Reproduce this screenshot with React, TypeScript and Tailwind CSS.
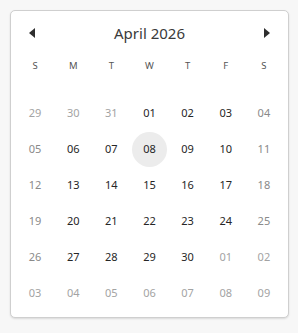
const weekdays = ["S", "M", "T", "W", "T", "F", "S"];

type Day = { n: string; out?: boolean };

const days: Day[] = [
  { n: "29", out: true }, { n: "30", out: true }, { n: "31", out: true },
  { n: "01" }, { n: "02" }, { n: "03" }, { n: "04" },
  { n: "05" }, { n: "06" }, { n: "07" }, { n: "08" }, { n: "09" }, { n: "10" }, { n: "11" },
  { n: "12" }, { n: "13" }, { n: "14" }, { n: "15" }, { n: "16" }, { n: "17" }, { n: "18" },
  { n: "19" }, { n: "20" }, { n: "21" }, { n: "22" }, { n: "23" }, { n: "24" }, { n: "25" },
  { n: "26" }, { n: "27" }, { n: "28" }, { n: "29" }, { n: "30" },
  { n: "01", out: true }, { n: "02", out: true },
  { n: "03", out: true }, { n: "04", out: true }, { n: "05", out: true }, { n: "06", out: true },
  { n: "07", out: true }, { n: "08", out: true }, { n: "09", out: true },
];

export default function App() {
  return (
    <div className="min-h-[333px] w-[298px] bg-[#f7f7f7] pt-[10px] pl-[10px] font-['Noto_Sans',sans-serif]">
      <div className="w-[279px] rounded-[5px] border border-[#cfcfcf] bg-white px-[5px] py-[6px] shadow-[0_1px_2px_rgba(0,0,0,0.12)]">
        <div className="flex h-[32px] items-center justify-between px-[6px]">
          <button className="flex h-[20px] w-[20px] items-center justify-center">
            <svg width="6" height="10" viewBox="0 0 6 10">
              <path d="M6 0 L0 5 L6 10 Z" fill="#2e2e2e" />
            </svg>
          </button>
          <span className="text-[15px] text-[#3a3a3a]">April 2026</span>
          <button className="flex h-[20px] w-[20px] items-center justify-center">
            <svg width="6" height="10" viewBox="0 0 6 10">
              <path d="M0 0 L6 5 L0 10 Z" fill="#2e2e2e" />
            </svg>
          </button>
        </div>
        <div className="mt-[7px] grid h-[20px] grid-cols-7 items-center text-center text-[9.5px] text-[#555]">
          {weekdays.map((d, i) => (
            <span key={i}>{d}</span>
          ))}
        </div>
        <div className="mt-[19px] grid grid-cols-7 text-[11px]">
          {days.map((d, i) => {
            const weekend = i % 7 === 0 || i % 7 === 6;
            const selected = !d.out && d.n === "08";
            const color = d.out ? "text-[#a3a3a3]" : weekend ? "text-[#8a8a8a]" : "text-[#262626]";
            return (
              <div key={i} className="flex h-[36px] items-center justify-center">
                <span
                  className={`flex h-[35px] w-[35px] items-center justify-center rounded-full ${color} ${
                    selected ? "bg-[#ececec]" : ""
                  }`}
                >
                  {d.n}
                </span>
              </div>
            );
          })}
        </div>
      </div>
    </div>
  );
}
